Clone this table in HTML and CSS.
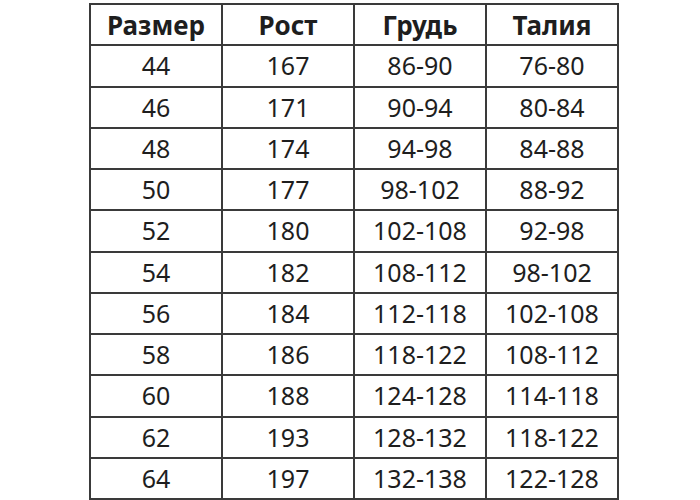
FILE: index.html
```html
<!DOCTYPE html>
<html lang="ru">
<head>
<meta charset="utf-8">
<title>Таблица размеров</title>
<link rel="stylesheet" href="styles.css">
</head>
<body>
<table class="sizes">
  <thead>
    <tr><th>Размер</th><th>Рост</th><th>Грудь</th><th>Талия</th></tr>
  </thead>
  <tbody>
    <tr><td>44</td><td>167</td><td>86-90</td><td>76-80</td></tr>
    <tr><td>46</td><td>171</td><td>90-94</td><td>80-84</td></tr>
    <tr><td>48</td><td>174</td><td>94-98</td><td>84-88</td></tr>
    <tr><td>50</td><td>177</td><td>98-102</td><td>88-92</td></tr>
    <tr><td>52</td><td>180</td><td>102-108</td><td>92-98</td></tr>
    <tr><td>54</td><td>182</td><td>108-112</td><td>98-102</td></tr>
    <tr><td>56</td><td>184</td><td>112-118</td><td>102-108</td></tr>
    <tr><td>58</td><td>186</td><td>118-122</td><td>108-112</td></tr>
    <tr><td>60</td><td>188</td><td>124-128</td><td>114-118</td></tr>
    <tr><td>62</td><td>193</td><td>128-132</td><td>118-122</td></tr>
    <tr><td>64</td><td>197</td><td>132-138</td><td>122-128</td></tr>
  </tbody>
</table>
</body>
</html>
```
FILE: styles.css
```css
html, body {
  margin: 0;
  padding: 0;
  background: #ffffff;
}
body {
  padding-top: 3px;
  font-family: "Noto Sans", "Open Sans", sans-serif;
  color: #1e1e1e;
}
.sizes {
  border-collapse: collapse;
  margin: 0 0 0 89px;
  table-layout: fixed;
  width: 520px;
}
.sizes th,
.sizes td {
  border: 2px solid #3a3a3a;
  width: 130px;
  height: 39.25px;
  padding: 0;
  text-align: center;
  vertical-align: middle;
  font-size: 25px;
  line-height: 1;
}
.sizes th {
  font-weight: 700;
  font-size: 26px;
}
.sizes td {
  font-weight: 400;
}
```
